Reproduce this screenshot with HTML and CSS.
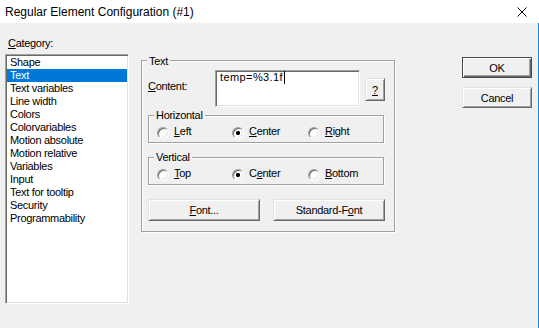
FILE: index.html
```html
<!DOCTYPE html>
<html lang="en">
<head>
    <meta charset="UTF-8">
    <title>Regular Element Configuration (#1)</title>
    <link rel="stylesheet" href="styles.css">
</head>
<body>
    <div class="titlebar">
        <span class="title">Regular Element Configuration (#1)</span>
        <svg class="close" width="10" height="10" viewBox="0 0 10 10">
            <path d="M0.5 0.5L9.5 9.5M9.5 0.5L0.5 9.5" stroke="#000" stroke-width="1" fill="none"/>
        </svg>
    </div>

    <div class="client">
        <div class="category">
            <div class="label"><u>C</u>ategory:</div>
            <ul class="listbox">
                <li>Shape</li>
                <li class="selected">Text</li>
                <li>Text variables</li>
                <li>Line width</li>
                <li>Colors</li>
                <li>Colorvariables</li>
                <li>Motion absolute</li>
                <li>Motion relative</li>
                <li>Variables</li>
                <li>Input</li>
                <li>Text for tooltip</li>
                <li>Security</li>
                <li>Programmability</li>
            </ul>
        </div>

        <div class="group text-group">
            <div class="caption">Text</div>
            <div class="content-row">
                <span class="content-label"><u>C</u>ontent:</span>
                <div class="edit">temp=%3.1f<span class="caret"></span></div>
                <button class="btn help"><u>?</u></button>
            </div>

            <div class="group align-group first">
                <div class="caption">Horizontal</div>
                <div class="radios">
                    <div class="radio"><span class="dot"></span><span><u>L</u>eft</span></div>
                    <div class="radio"><span class="dot checked"></span><span><u>C</u>enter</span></div>
                    <div class="radio"><span class="dot"></span><span><u>R</u>ight</span></div>
                </div>
            </div>

            <div class="group align-group">
                <div class="caption">Vertical</div>
                <div class="radios">
                    <div class="radio"><span class="dot"></span><span><u>T</u>op</span></div>
                    <div class="radio"><span class="dot checked"></span><span>C<u>e</u>nter</span></div>
                    <div class="radio"><span class="dot"></span><span><u>B</u>ottom</span></div>
                </div>
            </div>

            <div class="font-buttons">
                <button class="btn"><u>F</u>ont...</button>
                <button class="btn">Standard-F<u>o</u>nt</button>
            </div>
        </div>

        <div class="actions">
            <button class="btn default">OK</button>
            <button class="btn">Cancel</button>
        </div>
    </div>
</body>
</html>
```

FILE: styles.css
```css
:root {
    --face: #f0f0f0;
    --light: #e3e3e3;
    --shadow: #a0a0a0;
    --dark: #696969;
    --select: #0078d7;
}

* {
    margin: 0;
    padding: 0;
    box-sizing: border-box;
}

body {
    width: 539px;
    height: 328px;
    overflow: hidden;
    background: var(--face);
    color: #000;
    font-family: "Liberation Sans", Arial, sans-serif;
    font-size: 11px;
    letter-spacing: -0.3px;
}

u {
    text-decoration: underline;
    text-underline-offset: 1px;
}

.titlebar {
    height: 23px;
    background: #fff;
    display: flex;
    align-items: center;
    justify-content: space-between;
    padding: 0 12px 0 5px;
    font-size: 12px;
    letter-spacing: 0;
}

.client {
    height: 305px;
    display: flex;
    align-items: flex-start;
    border-right: 1px solid #1883d7;
}

/* category list */
.category {
    width: 124px;
    margin: 14px 0 0 5px;
}

.category .label {
    line-height: 13px;
    padding-left: 3px;
}

.listbox {
    list-style: none;
    margin-top: 4px;
    height: 250px;
    padding: 1px;
    background: #fff;
    border: 1px solid;
    border-color: var(--shadow) #fff #fff var(--shadow);
    box-shadow: inset 1px 1px var(--dark), inset -1px -1px var(--light);
}

.listbox li {
    line-height: 13px;
    height: 13px;
    padding-left: 3px;
    white-space: nowrap;
}

.listbox li.selected {
    background: var(--select);
    color: #fff;
}

/* etched group boxes */
.group {
    border: 1px solid var(--shadow);
    box-shadow: inset 1px 1px #fff, 1px 1px #fff;
}

.caption {
    width: fit-content;
    margin: -7px 0 0 5px;
    padding: 0 2px;
    line-height: 13px;
    background: var(--face);
}

.text-group {
    width: 254px;
    height: 172px;
    margin: 37px 0 0 12px;
}

.text-group > .caption {
    margin-top: -6px;
}

.content-row {
    display: flex;
    align-items: flex-start;
    margin: 2px 0 0 6px;
}

.content-label {
    width: 67px;
    margin-top: 10px;
    line-height: 13px;
}

.edit {
    width: 145px;
    height: 37px;
    padding: 0 3px 0 4px;
    line-height: 13px;
    letter-spacing: 0.4px;
    background: #fff;
    border: 1px solid;
    border-color: var(--shadow) #fff #fff var(--shadow);
    box-shadow: inset 1px 1px var(--dark), inset -1px -1px var(--light);
}

.caret {
    display: inline-block;
    width: 1px;
    height: 13px;
    margin-left: 1px;
    background: #000;
    vertical-align: top;
}

.btn {
    font: inherit;
    letter-spacing: inherit;
    color: #000;
    background: var(--face);
    border: 1px solid;
    border-color: var(--light) var(--dark) var(--dark) var(--light);
    box-shadow: inset 1px 1px #fff, inset -1px -1px var(--shadow);
    height: 22px;
    text-align: center;
}

.help {
    width: 20px;
    height: 23px;
    margin: 8px 0 0 5px;
}

.align-group {
    width: 236px;
    height: 28px;
    margin: 14px 0 0 6px;
}

.align-group.first {
    margin-top: 8px;
}

.radios {
    display: grid;
    grid-template-columns: 75px 76px 1fr;
    margin-top: 3px;
    padding-left: 8px;
}

.radio {
    display: flex;
    align-items: flex-start;
    gap: 5px;
    line-height: 13px;
}

.dot {
    width: 12px;
    height: 12px;
    margin-top: 2px;
    border-radius: 50%;
    background: #fff;
    border: 1px solid;
    border-color: var(--shadow) #fff #fff var(--shadow);
    box-shadow: inset 1px 1px var(--dark), inset -1px -1px var(--light);
}

.dot.checked {
    background: radial-gradient(circle, #000 1.8px, #fff 2.4px);
}

.font-buttons {
    display: flex;
    gap: 13px;
    margin: 14px 0 0 6px;
}

.font-buttons .btn {
    width: 112px;
}

/* OK / Cancel */
.actions {
    display: flex;
    flex-direction: column;
    gap: 9px;
    margin: 34px 0 0 67px;
}

.actions .btn {
    width: 70px;
    height: 21px;
}

.actions .default {
    border-color: #4a4a4a;
    box-shadow: inset 1px 1px #fff, inset -1px -1px var(--dark), inset -2px -2px var(--shadow);
}
```
